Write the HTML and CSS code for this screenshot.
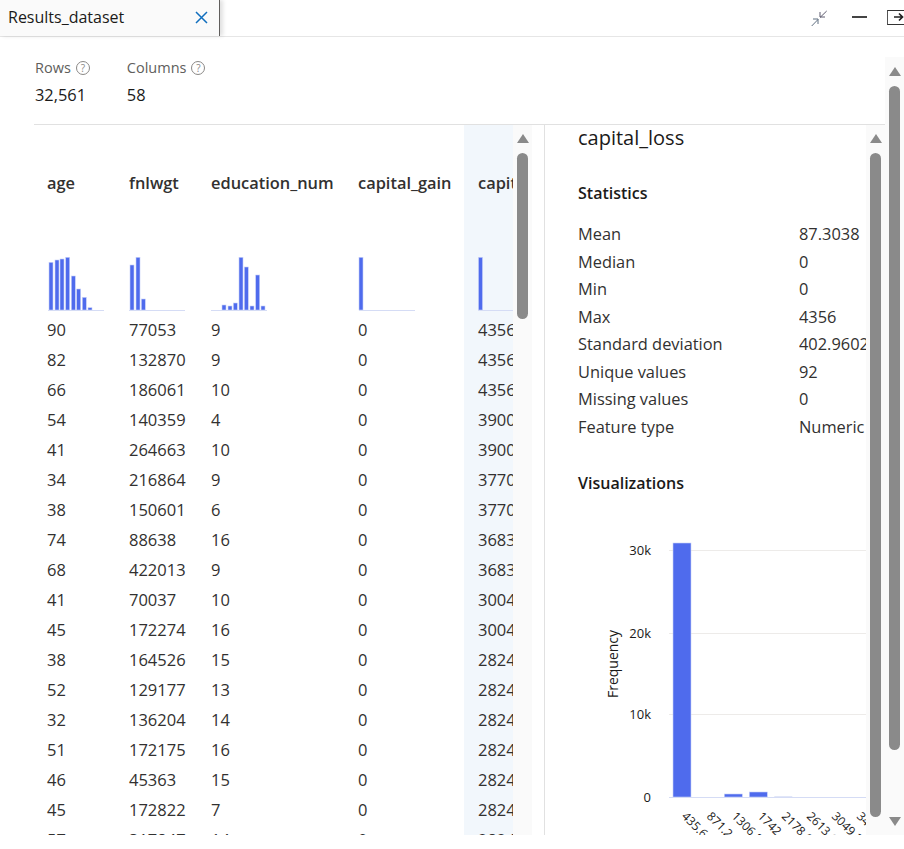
FILE: index.html
```html
<!DOCTYPE html>
<html lang="en">
<head>
<meta charset="utf-8">
<title>Results_dataset</title>
<link rel="stylesheet" href="styles.css">
</head>
<body>
<div class="app">
  <header class="topbar">
    <div class="tab">
      <span class="tab-title">Results_dataset</span>
      <svg class="tab-close" width="13" height="13" viewBox="0 0 13 13"><path d="M1 1L12 12M12 1L1 12" stroke="#106ebe" stroke-width="1.500" fill="none"/></svg>
    </div>
    <div class="window-actions">
      <svg class="win-collapse" width="18" height="18" viewBox="0 0 18 18"><path d="M15.700 1L9 7.500M9 2V7H14" stroke="#5d5a6e" stroke-width="1" fill="none"/><path d="M.7 16L7 9.500M2 9H7V14" stroke="#5f6f80" stroke-width="1" fill="none"/></svg>
      <svg class="win-min" width="15" height="2" viewBox="0 0 15 2"><rect width="15" height="2" fill="#444"/></svg>
      <div class="win-exit"><svg width="14" height="12" viewBox="0 0 14 12"><path d="M1 6H9.500M6 2.500L9.500 6L6 9.500" stroke="#222" stroke-width="1.700" fill="none"/></svg></div>
    </div>
  </header>
  <div class="page">
    <main class="content">
      <section class="summary">
        <div class="metric">
          <div class="metric-label">Rows <span class="help">?</span></div>
          <div class="metric-value">32,561</div>
        </div>
        <div class="metric">
          <div class="metric-label">Columns <span class="help">?</span></div>
          <div class="metric-value">58</div>
        </div>
      </section>
      <section class="split">
        <div class="table-pane">
          <div class="table-clip">
            <table class="data-table">
              <colgroup><col class="c1"><col class="c2"><col class="c3"><col class="c4"><col class="c5"></colgroup>
              <thead>
                <tr class="head-row"><th>age</th><th>fnlwgt</th><th>education_num</th><th>capital_gain</th><th class="sel">capital_loss</th></tr>
                <tr class="hist-row">
                  <td><svg class="hist" width="58" height="56" viewBox="0 0 58 56"><g class="bars"><rect x="2" y="7.300" width="4" height="47.700"/><rect x="8" y="5" width="4" height="50"/><rect x="13" y="4" width="4" height="51"/><rect x="18.700" y="2.300" width="4" height="52.700"/><rect x="24.300" y="21" width="4" height="34"/><rect x="29.700" y="34" width="4" height="21"/><rect x="35.300" y="42.300" width="4" height="12.700"/><rect x="41" y="52.700" width="4" height="2.300"/></g><rect class="axis" x="1" y="55" width="56" height="1"/></svg></td>
                  <td><svg class="hist" width="58" height="56" viewBox="0 0 58 56"><g class="bars"><rect x="1" y="10" width="4" height="45"/><rect x="7" y="2.300" width="4" height="52.700"/><rect x="12.300" y="44" width="4" height="11"/></g><rect class="axis" x="0" y="55" width="56" height="1"/></svg></td>
                  <td><svg class="hist" width="58" height="56" viewBox="0 0 58 56"><g class="bars"><rect x="11" y="50" width="4" height="5"/><rect x="17" y="51" width="4" height="4"/><rect x="22.300" y="48" width="4" height="7"/><rect x="28" y="2.300" width="4" height="52.700"/><rect x="33.300" y="12" width="4" height="43"/><rect x="39" y="51" width="4" height="4"/><rect x="44.700" y="20" width="4" height="35"/><rect x="50" y="51" width="4" height="4"/></g><rect class="axis" x="0" y="55" width="56" height="1"/></svg></td>
                  <td><svg class="hist" width="58" height="56" viewBox="0 0 58 56"><g class="bars"><rect x="1" y="2.300" width="4" height="52.700"/></g><rect class="axis" x="1" y="55" width="56" height="1"/></svg></td>
                  <td class="sel"><svg class="hist" width="58" height="56" viewBox="0 0 58 56"><g class="bars"><rect x="0.500" y="2.300" width="4" height="52.700"/></g><rect class="axis" y="55" width="56" height="1"/></svg></td>
                </tr>
              </thead>
              <tbody>
                <tr><td>90</td><td>77053</td><td>9</td><td>0</td><td class="sel">4356</td></tr>
                <tr><td>82</td><td>132870</td><td>9</td><td>0</td><td class="sel">4356</td></tr>
                <tr><td>66</td><td>186061</td><td>10</td><td>0</td><td class="sel">4356</td></tr>
                <tr><td>54</td><td>140359</td><td>4</td><td>0</td><td class="sel">3900</td></tr>
                <tr><td>41</td><td>264663</td><td>10</td><td>0</td><td class="sel">3900</td></tr>
                <tr><td>34</td><td>216864</td><td>9</td><td>0</td><td class="sel">3770</td></tr>
                <tr><td>38</td><td>150601</td><td>6</td><td>0</td><td class="sel">3770</td></tr>
                <tr><td>74</td><td>88638</td><td>16</td><td>0</td><td class="sel">3683</td></tr>
                <tr><td>68</td><td>422013</td><td>9</td><td>0</td><td class="sel">3683</td></tr>
                <tr><td>41</td><td>70037</td><td>10</td><td>0</td><td class="sel">3004</td></tr>
                <tr><td>45</td><td>172274</td><td>16</td><td>0</td><td class="sel">3004</td></tr>
                <tr><td>38</td><td>164526</td><td>15</td><td>0</td><td class="sel">2824</td></tr>
                <tr><td>52</td><td>129177</td><td>13</td><td>0</td><td class="sel">2824</td></tr>
                <tr><td>32</td><td>136204</td><td>14</td><td>0</td><td class="sel">2824</td></tr>
                <tr><td>51</td><td>172175</td><td>16</td><td>0</td><td class="sel">2824</td></tr>
                <tr><td>46</td><td>45363</td><td>15</td><td>0</td><td class="sel">2824</td></tr>
                <tr><td>45</td><td>172822</td><td>7</td><td>0</td><td class="sel">2824</td></tr>
                <tr><td>57</td><td>317847</td><td>14</td><td>0</td><td class="sel">2824</td></tr>
              </tbody>
            </table>
          </div>
          <div class="scrolltrack table-track">
            <span class="arrow-up"></span>
            <span class="thumb thumb-table"></span>
          </div>
        </div>
        <aside class="details">
          <div class="details-body">
            <h2 class="details-title">capital_loss</h2>
            <h3 class="section-title">Statistics</h3>
            <dl class="stats">
              <div class="stat"><dt>Mean</dt><dd>87.3038</dd></div>
              <div class="stat"><dt>Median</dt><dd>0</dd></div>
              <div class="stat"><dt>Min</dt><dd>0</dd></div>
              <div class="stat"><dt>Max</dt><dd>4356</dd></div>
              <div class="stat"><dt>Standard deviation</dt><dd>402.9602</dd></div>
              <div class="stat"><dt>Unique values</dt><dd>92</dd></div>
              <div class="stat"><dt>Missing values</dt><dd>0</dd></div>
              <div class="stat"><dt>Feature type</dt><dd>Numeric</dd></div>
            </dl>
            <h3 class="section-title viz-title">Visualizations</h3>
            <svg class="chart" width="288" height="314" viewBox="0 0 288 314">
              <g class="grid"><rect x="91" y="29" width="197" height="1"/><rect x="91" y="112" width="197" height="1"/><rect x="91" y="193" width="197" height="1"/></g>
              <g class="chart-bars"><rect x="95" y="22" width="18" height="254"/><rect x="146.300" y="273" width="18" height="3"/><rect x="171.300" y="271" width="18" height="5"/></g>
              <rect class="chart-faint" x="196.300" y="275.300" width="18" height="1"/>
              <rect class="chart-axis" x="91" y="276" width="197" height="1"/>
              <g class="ylabels"><text x="73" y="34">30k</text><text x="73" y="117">20k</text><text x="73" y="198">10k</text><text x="73" y="281">0</text></g>
              <text class="ytitle" transform="translate(40 143) rotate(-90)">Frequency</text>
              <g class="xlabels">
                <text transform="translate(103 296) rotate(45)">435.6</text>
                <text transform="translate(128 296) rotate(45)">871.2</text>
                <text transform="translate(153 296) rotate(45)">1306.8</text>
                <text transform="translate(179 296) rotate(45)">1742.4</text>
                <text transform="translate(203 296) rotate(45)">2178.0</text>
                <text transform="translate(228 296) rotate(45)">2613.6</text>
                <text transform="translate(253 296) rotate(45)">3049.2</text>
                <text transform="translate(278 296) rotate(45)">3484.8</text>
              </g>
            </svg>
          </div>
          <div class="scrolltrack details-track">
            <span class="arrow-up"></span>
            <span class="thumb thumb-details"></span>
          </div>
        </aside>
      </section>
    </main>
    <div class="scrolltrack page-track">
      <span class="arrow-up"></span>
      <span class="thumb thumb-page"></span>
      <span class="arrow-down"></span>
    </div>
  </div>
</div>
</body>
</html>
```

FILE: styles.css
```css
* { box-sizing: border-box; }
html, body { margin: 0; padding: 0; height: 100%; background: #fff; overflow: hidden; }
body { font-family: "Open Sans", "Noto Sans", sans-serif; color: #323130; }

.app { width: 904px; height: 849px; display: flex; flex-direction: column; overflow: hidden; }

.topbar { height: 37px; flex: none; display: flex; justify-content: space-between; border-bottom: 1px solid #e6e6e6; }
.tab { width: 220px; display: flex; align-items: center; justify-content: space-between; padding: 0 11px 2px 8px; background: #fafafa; border-right: 1px solid #605e5c; box-shadow: 3px 0 4px rgba(0,0,0,.12); }
.tab-title { font-size: 16px; color: #1b1a19; }
.tab-close { display: block; }
.window-actions { display: flex; align-items: center; padding-bottom: 2px; }
.win-collapse { margin: 4px 23px 0 0; display: block; }
.win-min { margin-right: 20px; display: block; }
.win-exit { width: 17px; height: 15px; border: 1.500px solid #333; border-right: 0; border-left-color: #555; padding: 0 0 0 5px; display: flex; align-items: center; }
.win-exit svg { display: block; flex: none; }

.page { flex: 1; min-height: 0; display: flex; align-items: flex-start; }
.content { width: 885px; flex: none; padding: 20px 0 0 34px; }

.summary { display: flex; gap: 37px; height: 68px; padding: 1px 0 0 1px; border-bottom: 1px solid #e1e1e1; }
.metric { display: flex; flex-direction: column; }
.metric-label { font-size: 14.500px; line-height: 20px; color: #605e5c; display: flex; align-items: center; gap: 5px; }
.help { width: 14px; height: 14px; border-radius: 50%; border: 1px solid #8a8886; font-size: 10px; line-height: 12px; text-align: center; color: #8a8886; }
.metric-value { font-size: 16.400px; line-height: 22px; margin-top: 6px; color: #1b1a19; }

.split { display: flex; height: 710px; }
.table-pane { width: 510px; flex: none; display: flex; }
.table-clip { width: 479px; height: 710px; overflow: hidden; flex: none; }
.data-table { border-collapse: collapse; table-layout: fixed; width: 601px; font-size: 16.500px; margin-left: -1px; }
.c1, .c2 { width: 82px; }
.c3 { width: 147px; }
.c4 { width: 120px; }
.c5 { width: 170px; }
.data-table th, .data-table td { padding: 0 0 0 14px; text-align: left; white-space: nowrap; overflow: hidden; }
.data-table th { height: 114px; font-weight: 600; font-size: 16.400px; color: #323130; vertical-align: middle; }
.data-table .hist-row td { height: 76px; vertical-align: top; padding-top: 16px; }
.hist { display: block; }
.bars rect { fill: #4f6bed; stroke: #c7d0f8; stroke-width: .6; }
.axis { fill: #d5dcf5; }
.data-table tbody td { height: 30px; line-height: 30px; color: #323130; }
.sel { background: #f2f7fc; }

.scrolltrack { position: relative; flex: none; background: #fafafa; display: flex; flex-direction: column; align-items: center; }
.table-track { width: 19px; height: 710px; padding: 9px 0 0 0; margin-right: 12px; }
.details-track { width: 19px; height: 710px; padding: 9px 0 0 0; }
.page-track { width: 19px; height: 778px; margin-top: 20px; padding-top: 10px; }
.arrow-up, .arrow-down { width: 0; height: 0; border-left: 6px solid transparent; border-right: 6px solid transparent; display: block; flex: none; }
.arrow-up { border-bottom: 9px solid #8a8a8a; }
.arrow-down { border-top: 9px solid #8a8a8a; margin-top: 67px; }
.thumb { display: block; width: 11px; background: #8a8a8a; border-radius: 6px; flex: none; margin-top: 10px; }
.thumb-table { height: 166px; }
.thumb-details { height: 664px; }
.thumb-page { height: 664px; }

.details { flex: 1; display: flex; border-left: 1px solid #e1e1e1; }
.details-body { width: 321px; flex: none; padding: 0 0 0 33px; overflow: hidden; height: 710px; }
.details-title { margin: 0; font-size: 20px; font-weight: 400; line-height: 26px; color: #1b1a19; }
.section-title { margin: 0; font-size: 16px; font-weight: 600; line-height: 22px; color: #1b1a19; }
.details-title + .section-title { margin-top: 31px; }
.stats { margin: 16px 0 0; }
.stat { display: flex; height: 27.500px; line-height: 27.500px; font-size: 16.400px; margin: 0; }
.stat dt { width: 221px; flex: none; }
.stat dd { margin: 0; width: 68px; overflow: hidden; white-space: nowrap; }
.viz-title { margin-top: 32px; }
.chart { display: block; margin: 27px 0 0 0; }
.grid rect { fill: #edebe9; }
.chart-bars rect { fill: #4f6bed; stroke: #c7d0f8; stroke-width: .6; }
.chart-faint { fill: #d5dcf5; }
.chart-axis { fill: #d5dcf5; }
.ylabels text { font-size: 13px; text-anchor: end; fill: #1b1a19; }
.ytitle { font-size: 14px; text-anchor: middle; fill: #1b1a19; }
.xlabels text { font-size: 12px; fill: #1b1a19; }
```
